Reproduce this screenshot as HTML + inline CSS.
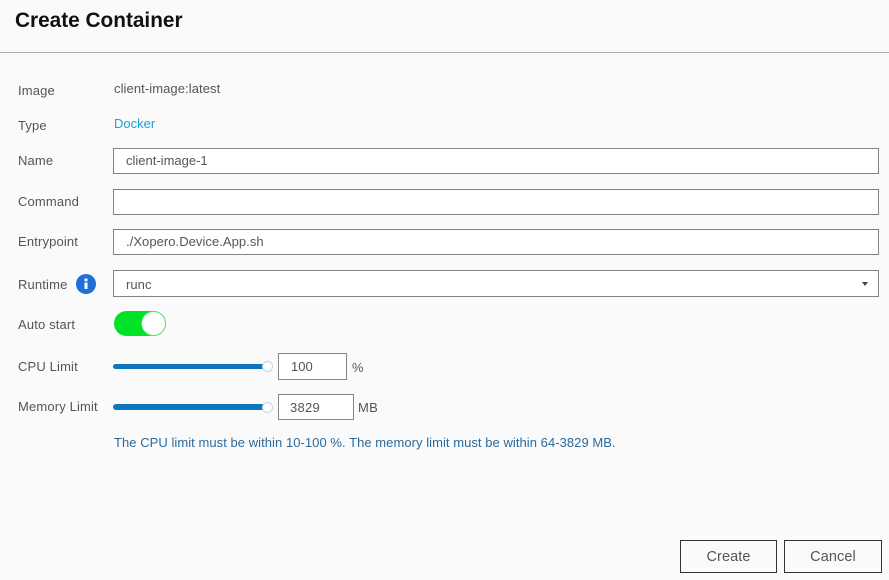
<!DOCTYPE html>
<html><head><meta charset="utf-8">
<style>
html,body{margin:0;padding:0;background:#fafafa}
body{width:889px;height:580px;position:relative;overflow:hidden;font-family:"Liberation Sans",sans-serif;font-size:13px;color:#555;letter-spacing:.05px}
.t{position:absolute;white-space:nowrap;line-height:16px}
.l{letter-spacing:.15px}
.b{position:absolute;box-sizing:border-box;background:#fff;border:1px solid #848484}
.btn{position:absolute;box-sizing:border-box;border:1px solid #333;background:#fafafa;top:540px;height:33px;text-align:center;font-size:14.5px;line-height:33px;color:#555;letter-spacing:.1px}
</style></head><body>
<div class="t" style="left:15px;top:9px;font-size:20.8px;line-height:24px;font-weight:bold;color:#111;letter-spacing:0">Create Container</div>
<div style="position:absolute;left:0;top:52px;width:889px;height:1px;background:#aaa"></div>

<div class="t l" style="left:18px;top:83px">Image</div>
<div class="t" style="left:114px;top:81px;letter-spacing:.08px">client-image:latest</div>
<div class="t l" style="left:18px;top:118px">Type</div>
<div class="t" style="left:114px;top:116px;color:#1ba1dc;letter-spacing:0">Docker</div>
<div class="t l" style="left:18px;top:153px">Name</div>
<div class="b" style="left:113px;top:148px;width:766px;height:26px"></div>
<div class="t" style="left:126px;top:153px;letter-spacing:0">client-image-1</div>
<div class="t l" style="left:18px;top:194px">Command</div>
<div class="b" style="left:113px;top:189px;width:766px;height:26px"></div>
<div class="t l" style="left:18px;top:234px">Entrypoint</div>
<div class="b" style="left:113px;top:229px;width:766px;height:26px"></div>
<div class="t" style="left:126px;top:234px">./Xopero.Device.App.sh</div>
<div class="t l" style="left:18px;top:277px">Runtime</div>
<svg style="position:absolute;left:76px;top:274px" width="20" height="20" viewBox="0 0 20 20"><circle cx="10" cy="10" r="10" fill="#1f6fd8"/><rect x="8.5" y="8.5" width="3" height="6.5" fill="#fff"/><rect x="8.5" y="4.6" width="3" height="2.6" fill="#fff"/></svg>
<div class="b" style="left:113px;top:270px;width:766px;height:27px"></div>
<div class="t" style="left:126px;top:277px">runc</div>
<div style="position:absolute;left:862px;top:282px;width:0;height:0;border-left:3.5px solid transparent;border-right:3.5px solid transparent;border-top:4px solid #444"></div>
<div class="t l" style="left:18px;top:317px">Auto start</div>
<div style="position:absolute;left:114px;top:311px;width:52px;height:25px;border-radius:13px;background:#00e226"></div>
<div style="position:absolute;box-sizing:border-box;left:141px;top:311px;width:25px;height:25px;border-radius:50%;background:#fff;border:1.5px solid #5fe07a"></div>
<div class="t l" style="left:18px;top:359px">CPU Limit</div>
<div style="position:absolute;left:113px;top:364px;width:152px;height:5px;border-radius:3px;background:#0f75bd"></div>
<div style="position:absolute;box-sizing:border-box;left:262px;top:361px;width:11px;height:11px;border-radius:50%;background:#fff;border:1px solid #b9d9e6"></div>
<div class="b" style="left:278px;top:353px;width:69px;height:27px"></div>
<div class="t" style="left:291px;top:359px">100</div>
<div class="t" style="left:352px;top:360px">%</div>
<div class="t l" style="left:18px;top:399px">Memory Limit</div>
<div style="position:absolute;left:113px;top:404px;width:152px;height:6px;border-radius:3px;background:#0f75bd"></div>
<div style="position:absolute;box-sizing:border-box;left:262px;top:402px;width:11px;height:11px;border-radius:50%;background:#fff;border:1px solid #b9d9e6"></div>
<div class="b" style="left:278px;top:394px;width:76px;height:26px"></div>
<div class="t" style="left:290px;top:400px;letter-spacing:.25px">3829</div>
<div class="t" style="left:358px;top:400px;letter-spacing:.3px">MB</div>
<div class="t" style="left:114px;top:435px;color:#2a6a9c">The CPU limit must be within 10-100 %. The memory limit must be within 64-3829 MB.</div>
<div class="btn" style="left:680px;width:97px">Create</div>
<div class="btn" style="left:784px;width:98px">Cancel</div>
</body></html>
